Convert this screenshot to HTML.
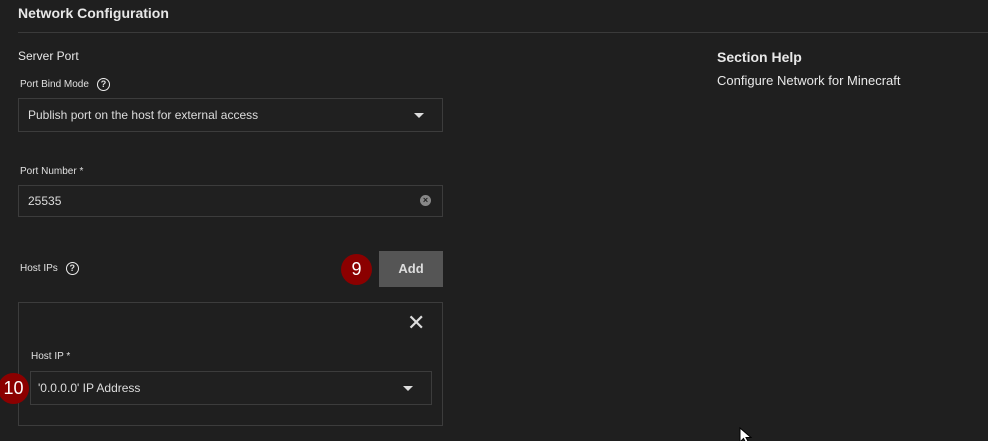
<!DOCTYPE html>
<html><head><style>
*{margin:0;padding:0;box-sizing:border-box}
body{width:988px;height:439px;background:#1f1f1f;font-family:"Liberation Sans",sans-serif;color:#e8e8e8;position:relative;overflow:hidden}
.a{position:absolute}
.box{position:absolute;border:1px solid #3c3c3c;background:#202020}
.lbl{font-size:10px;color:#e0e0e0}
.q{display:inline-block;width:13px;height:13px;border:1.5px solid #eee;border-radius:50%;font-size:9px;font-weight:bold;text-align:center;line-height:10px;margin-left:8px;vertical-align:middle}
.tri{position:absolute;width:0;height:0;border-left:5px solid transparent;border-right:5px solid transparent;border-top:5px solid #ddd}
.badge{position:absolute;width:31px;height:31px;border-radius:50%;background:#8b0000;color:#fff;font-family:"Liberation Sans",sans-serif;font-size:18px;text-align:center;line-height:31px}
</style></head><body>
<div class="a" style="left:18px;top:5px;font-size:14px;font-weight:bold">Network Configuration</div>
<div class="a" style="left:18px;top:32px;width:970px;height:1px;background:#3a3a3a"></div>
<div class="a" style="left:18px;top:49px;font-size:12px">Server Port</div>
<div class="a lbl" style="left:20px;top:78px">Port Bind Mode<span class="q">?</span></div>
<div class="box" style="left:18px;top:98px;width:425px;height:34px"></div>
<div class="a" style="left:28px;top:108px;font-size:12px;color:#ddd">Publish port on the host for external access</div>
<div class="tri" style="left:414px;top:113px"></div>
<div class="a lbl" style="left:20px;top:166px">Port Number *</div>
<div class="box" style="left:18px;top:185px;width:425px;height:32px"></div>
<div class="a" style="left:28px;top:194px;font-size:12px;color:#ddd">25535</div>
<div class="a" style="left:420px;top:195px;width:11px;height:11px;border-radius:50%;background:#888;color:#222;font-size:9px;line-height:11px;text-align:center;font-weight:bold">×</div>
<div class="a lbl" style="left:20px;top:262px">Host IPs<span class="q">?</span></div>
<div class="badge" style="left:341px;top:254px">9</div>
<div class="a" style="left:379px;top:251px;width:64px;height:36px;background:#555;color:#ddd;font-size:13px;font-weight:bold;text-align:center;line-height:36px">Add</div>
<div class="box" style="left:18px;top:302px;width:425px;height:124px;background:#1f1f1f"></div>
<div class="a" style="left:407px;top:310px;font-size:22px;color:#ddd;line-height:26px">✕</div>
<div class="a lbl" style="left:31px;top:351px">Host IP *</div>
<div class="box" style="left:30px;top:371px;width:402px;height:34px"></div>
<div class="a" style="left:38px;top:381px;font-size:12px;color:#ddd">'0.0.0.0' IP Address</div>
<div class="tri" style="left:403px;top:386px"></div>
<div class="badge" style="left:-2px;top:373px">10</div>
<div class="a" style="left:717px;top:49px;font-size:14px;font-weight:bold">Section Help</div>
<div class="a" style="left:717px;top:73px;font-size:13px">Configure Network for Minecraft</div>
<svg class="a" style="left:739px;top:427px" width="16" height="14"><path d="M1 1 L1 15 L4.5 11.5 L7.5 17 L10 16 L7 10.5 L12 10.5 Z" fill="#fff" stroke="#000" stroke-width="1"/></svg>
</body></html>
